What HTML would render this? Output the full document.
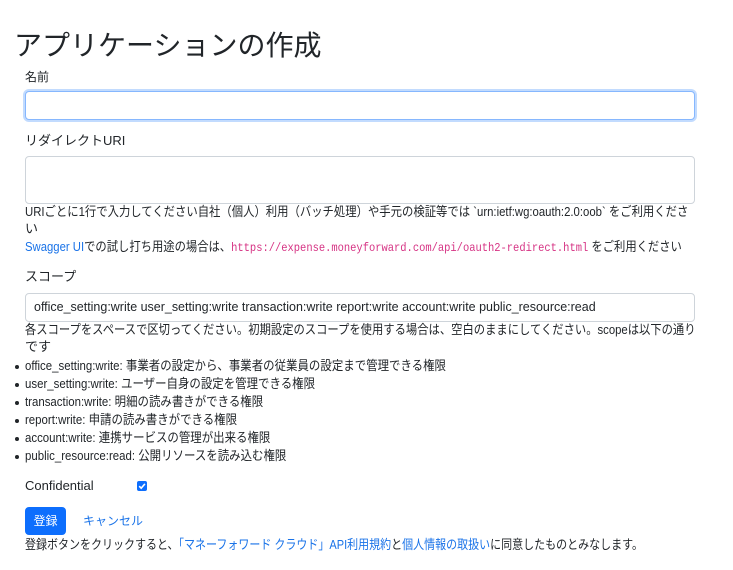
<!DOCTYPE html>
<html><head><meta charset="utf-8"><style>
body{margin:0;width:733px;height:570px;background:#fff;position:relative;overflow:hidden;font-family:"Liberation Sans","Noto Sans CJK JP",sans-serif;color:#212529;}
.a{position:absolute;white-space:nowrap;font-size:13px;line-height:16px;transform-origin:left center;}
.box{position:absolute;left:25px;width:668px;border:1px solid #ced4da;border-radius:4px;background:#fff;}
.l{color:#1a73e8;text-decoration:none}
.code{font-family:"Liberation Mono",monospace;color:#d63384;font-size:12px}
.dot{position:absolute;left:15px;width:4px;height:4px;border-radius:50%;background:#212529}
.li{transform:scaleX(.88)}
</style></head><body>
<div class="a" style="left:14px;top:29px;font-size:28px;line-height:34px;">アプリケーションの作成</div>
<div class="a" style="left:25px;top:69px;font-size:12px">名前</div>
<div class="box" style="top:91px;height:27px;border-color:#86b7fe;box-shadow:0 0 0 2px rgba(13,110,253,.25)"></div>
<div class="a" style="left:25px;top:133px">リダイレクトURI</div>
<div class="box" style="top:156px;height:46px"></div>
<div class="a" style="left:25px;top:204px;transform:scaleX(.873)">URIごとに1行で入力してください自社（個人）利用（バッチ処理）や手元の検証等では `urn:ietf:wg:oauth:2.0:oob` をご利用くださ</div>
<div class="a" style="left:25px;top:221px">い</div>
<div class="a" style="left:25px;top:239px;transform:scaleX(.87)"><span class="l">Swagger UI</span>での試し打ち用途の場合は、<span class="code">https://expense.moneyforward.com/api/oauth2-redirect.html</span> をご利用ください</div>
<div class="a" style="left:25px;top:269px">スコープ</div>
<div class="box" style="top:293px;height:27px"></div>
<div class="a" style="left:34px;top:299px;transform:scaleX(.96)">office_setting:write user_setting:write transaction:write report:write account:write public_resource:read</div>
<div class="a" style="left:25px;top:322px;transform:scaleX(.87)">各スコープをスペースで区切ってください。初期設定のスコープを使用する場合は、空白のままにしてください。scopeは以下の通り</div>
<div class="a" style="left:25px;top:339px">です</div>
<div class="dot" style="top:365px"></div><div class="a li" style="left:25px;top:358px">office_setting:write: 事業者の設定から、事業者の従業員の設定まで管理できる権限</div>
<div class="dot" style="top:383px"></div><div class="a li" style="left:25px;top:376px">user_setting:write: ユーザー自身の設定を管理できる権限</div>
<div class="dot" style="top:401px"></div><div class="a li" style="left:25px;top:394px">transaction:write: 明細の読み書きができる権限</div>
<div class="dot" style="top:419px"></div><div class="a li" style="left:25px;top:412px">report:write: 申請の読み書きができる権限</div>
<div class="dot" style="top:437px"></div><div class="a li" style="left:25px;top:430px">account:write: 連携サービスの管理が出来る権限</div>
<div class="dot" style="top:455px"></div><div class="a li" style="left:25px;top:448px">public_resource:read: 公開リソースを読み込む権限</div>
<div class="a" style="left:25px;top:478px">Confidential</div>
<div style="position:absolute;left:137px;top:481px;width:10px;height:10px;background:#0d6efd;border-radius:2px"><svg width="10" height="10" viewBox="0 0 10 10" style="position:absolute;left:0;top:0"><path d="M2.2 5.2 L4.2 7.2 L7.9 2.9" stroke="#fff" stroke-width="1.6" fill="none"/></svg></div>
<div style="position:absolute;left:25px;top:507px;width:41px;height:28px;background:#0d6efd;border-radius:4px;color:#fff;font-size:12px;line-height:28px;text-align:center">登録</div>
<div class="a l" style="left:83px;top:513px;font-size:12px">キャンセル</div>
<div class="a" style="left:25px;top:537px;transform:scaleX(.846)">登録ボタンをクリックすると、<span class="l">「マネーフォワード クラウド」API利用規約</span>と<span class="l">個人情報の取扱い</span>に同意したものとみなします。</div>
</body></html>
